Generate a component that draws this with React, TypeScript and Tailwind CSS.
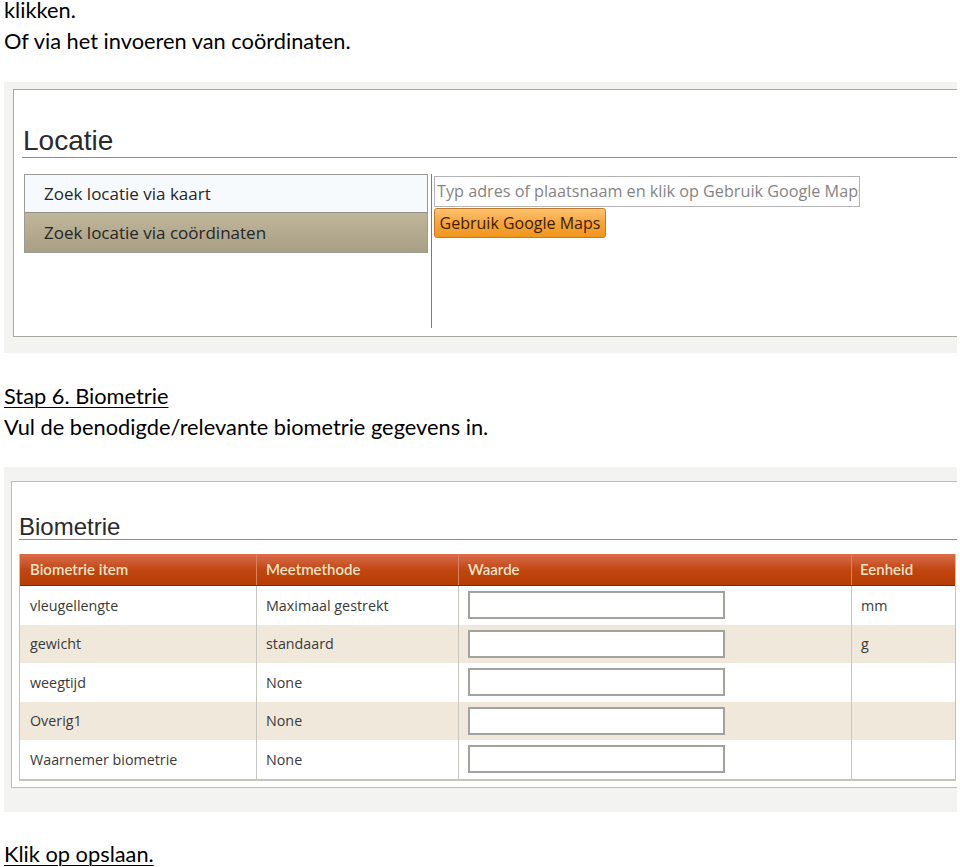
const rows = [
  { item: 'vleugellengte', method: 'Maximaal gestrekt', unit: 'mm' },
  { item: 'gewicht', method: 'standaard', unit: 'g' },
  { item: 'weegtijd', method: 'None', unit: '' },
  { item: 'Overig1', method: 'None', unit: '' },
  { item: 'Waarnemer biometrie', method: 'None', unit: '' },
]

function LocatieShot() {
  return (
    <div className="ml-[4px] mt-[26px] w-[953px] bg-[#f3f3f2] pl-[9px] pt-[7px] pb-[16px]">
      <div className="h-[248px] border-l border-t border-b border-[#a9a9a2] bg-white pl-[8px]">
        <h2 className="pt-[35px] pl-[1px] text-[28px] leading-[32px] text-[#2a2a2a] font-['Liberation_Sans',sans-serif]">
          Locatie
        </h2>
        <div className="h-px bg-[#8c8c8c]"></div>
        <div className="mt-[16px] flex">
          <div className="ml-[2px] w-[404px] h-[79px] border border-[#9b9b95] font-['Open_Sans',sans-serif] text-[17px] text-[#262626]">
            <div className="h-[38px] bg-[#f7fafc] border-b border-[#8f8f88] pl-[19px] flex items-center">
              Zoek locatie via kaart
            </div>
            <div className="h-[39px] bg-gradient-to-b from-[#bfb69c] to-[#a89f84] pl-[19px] flex items-center">
              Zoek locatie via coördinaten
            </div>
          </div>
          <div className="ml-[3px] w-px h-[154px] bg-[#7a7a7a]"></div>
          <div className="ml-[2px] pt-[2px] font-['Open_Sans',sans-serif] text-[16px]">
            <div className="w-[426px] h-[31px] border border-[#b4b4b4] pl-[2px] flex items-center overflow-hidden whitespace-nowrap text-[16.2px] text-[#858585]">
              Typ adres of plaatsnaam en klik op Gebruik Google Maps
            </div>
            <div className="mt-[1px] w-[172px] h-[30px] rounded-[3px] border border-[#c17a2c] bg-gradient-to-b from-[#fcc46e] via-[#f7a43a] to-[#f0961c] flex items-center justify-center text-[#3b1e00]">
              Gebruik Google Maps
            </div>
          </div>
        </div>
      </div>
    </div>
  )
}

function BiometrieShot() {
  return (
    <div className="ml-[4px] mt-[25px] w-[953px] bg-[#f3f3f2] pl-[7px] pt-[14px] pb-[24px]">
      <div className="h-[307px] border-l border-t border-b border-[#bdbdb2] bg-white pl-[7px]">
        <h2 className="pt-[32px] text-[24px] leading-[25px] text-[#2a2a2a] font-['Liberation_Sans',sans-serif]">
          Biometrie
        </h2>
        <div className="h-px bg-[#8c8c8c]"></div>
        <div className="mt-[14px] w-[937px] border-l border-r border-b-2 border-[#c3c3ba]">
          <div className="flex h-[32px] bg-gradient-to-b from-[#da6d4a] via-[#c1460f] to-[#b63c06] border-b border-[#7f2a06] font-['Lato',sans-serif] font-semibold text-[15px] text-[#f6e3c6]">
            <div className="w-[237px] pl-[10px] flex items-center border-r border-[#d7825c]">Biometrie item</div>
            <div className="w-[202px] pl-[9px] flex items-center border-r border-[#d7825c]">Meetmethode</div>
            <div className="w-[393px] pl-[9px] flex items-center border-r border-[#d7825c]">Waarde</div>
            <div className="flex-1 pl-[8px] flex items-center">Eenheid</div>
          </div>
          {rows.map((r, i) => (
            <div
              key={r.item}
              className={`flex h-[38.5px] font-['Open_Sans',sans-serif] text-[14.3px] text-[#3a3a3a] ${i % 2 === 1 ? 'bg-[#f1e8dc]' : 'bg-white'}`}
            >
              <div className="w-[237px] pl-[10px] flex items-center border-r border-[#c8c8c0]">{r.item}</div>
              <div className="w-[202px] pl-[9px] flex items-center border-r border-[#c8c8c0]">{r.method}</div>
              <div className="w-[393px] pl-[9px] flex items-center border-r border-[#c8c8c0]">
                <div className="w-[257px] h-[28px] border-2 border-[#a3a39d] bg-white"></div>
              </div>
              <div className="flex-1 pl-[9px] flex items-center">{r.unit}</div>
            </div>
          ))}
        </div>
      </div>
    </div>
  )
}

export default function App() {
  return (
    <div className="w-[960px] h-[867px] overflow-hidden bg-white text-black font-['Lato',sans-serif] text-[21.8px] leading-[31px]">
      <div className="pl-[4px] mt-[-6px]">
        <p>klikken.</p>
        <p>Of via het invoeren van coördinaten.</p>
      </div>
      <LocatieShot />
      <div className="pl-[4px] mt-[27px]">
        <p className="underline decoration-1 underline-offset-[3px]">Stap 6. Biometrie</p>
        <p>Vul de benodigde/relevante biometrie gegevens in.</p>
      </div>
      <BiometrieShot />
      <div className="pl-[4px] mt-[26px]">
        <p className="underline decoration-1 underline-offset-[3px]">Klik op opslaan.</p>
      </div>
    </div>
  )
}
